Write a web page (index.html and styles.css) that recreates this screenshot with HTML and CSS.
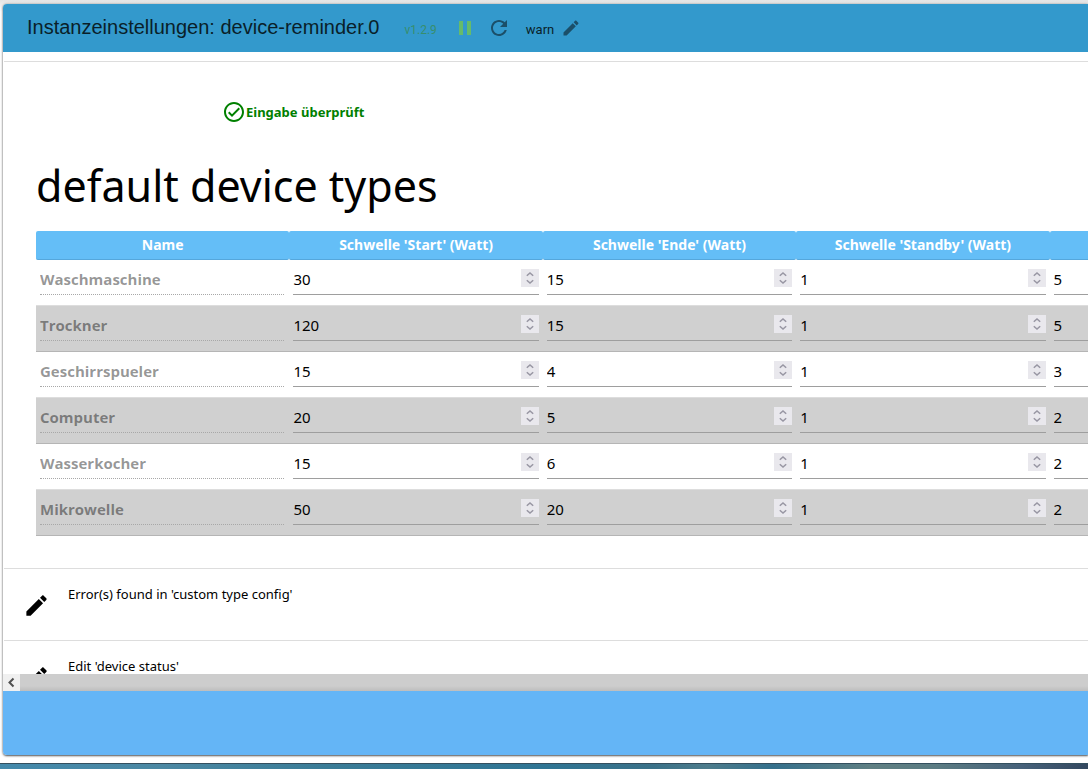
FILE: index.html
```html
<!DOCTYPE html>
<html lang="de">
<head>
<meta charset="utf-8">
<title>Instanzeinstellungen: device-reminder.0</title>
<link rel="stylesheet" href="styles.css">
</head>
<body>
<svg class="defs" aria-hidden="true">
  <symbol id="pencil" viewBox="0 0 24 24"><path d="M3 17.25V21h3.75L17.81 9.94l-3.75-3.75L3 17.25zM20.71 7.04c.39-.39.39-1.02 0-1.41l-2.34-2.34c-.39-.39-1.02-.39-1.41 0l-1.83 1.83 3.75 3.75 1.83-1.83z"/></symbol>
  <symbol id="up" viewBox="0 0 18 9"><path d="M5.8 6.8 9 3.9l3.2 2.9" fill="none" stroke="#9896a3" stroke-width="1.5"/></symbol>
  <symbol id="down" viewBox="0 0 18 9"><path d="M5.8 2.2 9 5.1l3.2-2.9" fill="none" stroke="#9896a3" stroke-width="1.5"/></symbol>
</svg>
<main class="dialog">
  <header class="bar">
    <h1 class="bar-title">Instanzeinstellungen: device-reminder.0</h1>
    <span class="version">v1.2.9</span>
    <button class="icon-btn pause" aria-label="Pause"><svg viewBox="0 0 24 24"><path d="M6 5h4v14H6zM14 5h4v14h-4z"/></svg></button>
    <button class="icon-btn reload" aria-label="Neu laden"><svg viewBox="0 0 24 24"><path d="M17.65 6.35C16.2 4.9 14.21 4 12 4c-4.42 0-7.99 3.58-7.99 8s3.57 8 7.99 8c3.73 0 6.84-2.55 7.73-6h-2.08c-.82 2.33-3.04 4-5.65 4-3.31 0-6-2.69-6-6s2.69-6 6-6c1.66 0 3.14.69 4.22 1.78L13 11h7V4l-2.35 2.35z"/></svg></button>
    <span class="level">warn</span>
    <button class="icon-btn edit" aria-label="Loglevel bearbeiten"><svg><use href="#pencil"/></svg></button>
  </header>
  <div class="content">
    <section class="panel types">
      <p class="checked"><svg viewBox="0 0 24 24"><path d="M12 2C6.48 2 2 6.48 2 12s4.48 10 10 10 10-4.48 10-10S17.52 2 12 2zm0 18c-4.41 0-8-3.59-8-8s3.59-8 8-8 8 3.59 8 8-3.59 8-8 8zm4.59-12.42L10 14.17l-2.59-2.58L6 13l4 4 8-8z"/></svg>Eingabe überprüft</p>
      <h2 class="heading">default device types</h2>
      <table class="grid">
        <thead><tr><th>Name</th><th>Schwelle 'Start' (Watt)</th><th>Schwelle 'Ende' (Watt)</th><th>Schwelle 'Standby' (Watt)</th><th></th></tr></thead>
        <tbody id="rows"></tbody>
      </table>
    </section>
    <section class="panel entry">
      <button class="icon-btn open" aria-label="custom type config bearbeiten"><svg><use href="#pencil"/></svg></button>
      <p class="entry-text">Error(s) found in 'custom type config'</p>
    </section>
    <section class="panel entry">
      <button class="icon-btn open" aria-label="device status bearbeiten"><svg><use href="#pencil"/></svg></button>
      <p class="entry-text">Edit 'device status'</p>
    </section>
  </div>
  <div class="scroll">
    <button class="scroll-left" aria-label="Nach links"><svg viewBox="0 0 17 17"><path d="M10.500 4.500 6.500 8.500l4 4" fill="none" stroke="#505050" stroke-width="2"/></svg></button>
  </div>
  <footer class="foot"></footer>
</main>
<div class="desktop"></div>
<script src="rows.js"></script>
</body>
</html>
```
FILE: rows.js
```javascript
const devices = [
  ['Waschmaschine', 30, 15, 1, 5],
  ['Trockner', 120, 15, 1, 5],
  ['Geschirrspueler', 15, 4, 1, 3],
  ['Computer', 20, 5, 1, 2],
  ['Wasserkocher', 15, 6, 1, 2],
  ['Mikrowelle', 50, 20, 1, 2]
];
const labels = ['Start', 'Ende', 'Standby', 'Anzahl'];

document.getElementById('rows').innerHTML = devices.map(([name, ...values]) => `
  <tr>
    <td><div class="field locked"><input type="text" value="${name}" aria-label="Name" disabled></div></td>
    ${values.map((value, i) => `<td><div class="field">
      <input type="number" value="${value}" aria-label="${name} ${labels[i]}">
      <span class="spin">
        <button aria-label="Mehr"><svg><use href="#up"/></svg></button>
        <button aria-label="Weniger"><svg><use href="#down"/></svg></button>
      </span>
    </div></td>`).join('')}
  </tr>`).join('');
```
FILE: styles.css
```css
* { box-sizing: border-box; }

body {
  margin: 0;
  height: 100vh;
  display: flex;
  flex-direction: column;
  overflow: hidden;
  background: linear-gradient(#e4e4e4, #fff 12px);
  color: #000;
  font-family: "Noto Sans", sans-serif;
}

h1, h2, p { margin: 0; font-weight: 400; }

button {
  padding: 0;
  border: 0;
  background: none;
  display: block;
}

svg { display: block; fill: currentColor; }

.defs { display: none; }

.dialog {
  flex: 1;
  min-height: 0;
  margin: 4px 0 8px 3px;
  display: flex;
  flex-direction: column;
  overflow: hidden;
  border-radius: 4px 0 0 4px;
  background: #fff;
  box-shadow: 0 1px 2px rgba(0, 0, 0, .6), 0 0 3px rgba(0, 0, 0, .3);
}

.bar {
  flex: none;
  height: 48px;
  padding-left: 24px;
  display: flex;
  align-items: center;
  background: #3399cc;
}

.bar-title {
  margin-right: 25px;
  padding-bottom: 2px;
  color: #0a1f29;
  font: 20px/24px "Liberation Sans", sans-serif;
}

.version, .level {
  padding-top: 4px;
  font: 13px/16px Roboto, sans-serif;
}

.version { color: #388e6c; font-size: 12px; }
.level { color: #0a1f29; }

.icon-btn svg { width: 24px; height: 24px; }
.pause { margin-left: 16px; color: #66bb6a; }
.reload { margin: 0 15px 0 10px; color: #1b4f69; }
.edit { margin-left: 7px; color: #1b4f69; }
.edit svg { width: 20px; height: 20px; }

.content {
  flex: 1;
  min-height: 0;
  margin-left: 1px;
  padding-top: 9px;
  overflow: hidden;
}

.panel { border-top: 1px solid #ddd; }

.types { padding: 38px 0 32px 32px; }

.checked {
  display: flex;
  align-items: center;
  margin-left: 186px;
  color: #008000;
  font-size: 13px;
  line-height: 24px;
  font-weight: 700;
}

.checked svg { width: 24px; height: 24px; }

.heading {
  padding: 34px 0 17px;
  font-size: 43px;
  line-height: 56px;
}

.grid {
  width: 1267px;
  table-layout: fixed;
  border-collapse: separate;
  border-spacing: 0;
}

.grid th {
  height: 29px;
  padding: 0 4px;
  border-bottom: 1px solid #55a7dc;
  border-radius: 2px;
  background: #64bef7;
  color: #fff;
  font-size: 14px;
  line-height: 20px;
}

.grid td { padding: 0 4px 10px; }

.grid tbody tr:nth-child(even) td {
  border-top: 1px solid #ddd;
  border-bottom: 1px solid #b5b5b5;
  background: #d0d0d0;
}

.field {
  height: 35px;
  padding-top: 2px;
  display: flex;
  align-items: center;
  border-bottom: 1px solid #9e9e9e;
}

.locked {
  margin-right: 1px;
  border-bottom: 1px dotted #a8a8a8;
}

.field input {
  flex: 1;
  min-width: 0;
  height: 28px;
  padding: 2px 0 0;
  border: 0;
  background: transparent;
  color: #000;
  font: 15px/20px "Noto Sans", sans-serif;
  appearance: textfield;
}

.field input::-webkit-inner-spin-button { appearance: none; }

.locked input {
  color: rgba(0, 0, 0, .42);
  font-family: "Open Sans", sans-serif;
  font-weight: 700;
}

.spin { flex: none; width: 18px; background: #e9e8ed; }
.spin svg { width: 18px; height: 9px; }

.entry {
  height: 72px;
  padding: 15px 19px;
  display: flex;
  align-items: flex-start;
}

.open { margin: 8px 18px 0 0; }
.open svg { width: 27px; height: 27px; }

.entry-text {
  font-size: 13px;
  line-height: 20px;
}

.scroll {
  flex: none;
  height: 17px;
  background: linear-gradient(#cdcdcd 12px, #bdbdbd);
}

.scroll-left { width: 17px; height: 17px; background: #f0f0f0; }

.foot {
  flex: none;
  height: 64px;
  background: #64b5f6;
}

.desktop {
  flex: none;
  height: 6px;
  border-top: 1px solid #34505f;
  background: linear-gradient(90deg, #4389ab, #4b88a3 15%, #3a7c97 30%, #2f7594 50%, #3a7188 60%, #4d7c8c 65%, #34708c 71%, #5f7f83 80%, #5b7c83 86%, #46617a 94%, #33485f);
}
```
